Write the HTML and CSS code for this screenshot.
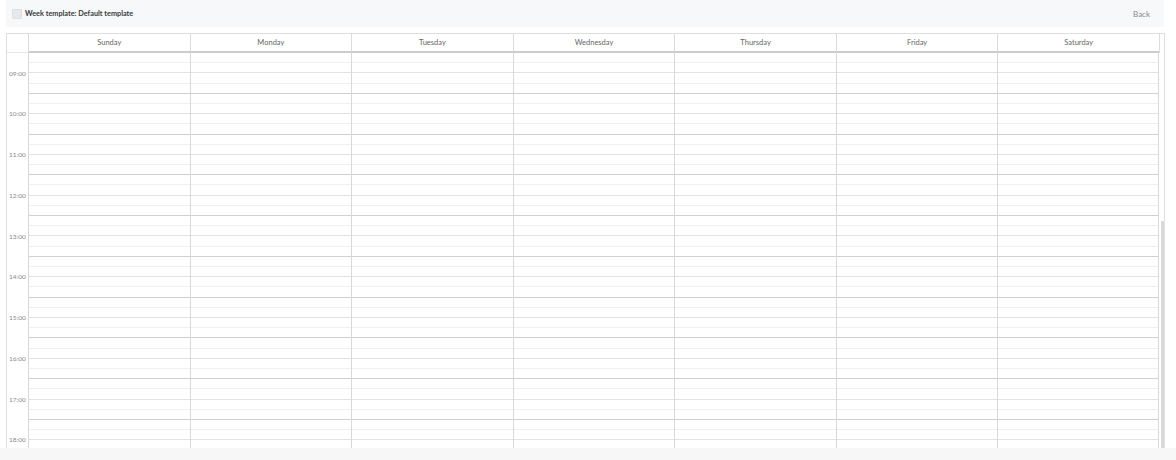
FILE: index.html
```html
<!DOCTYPE html>
<html lang="en">
<head>
  <meta charset="UTF-8" />
  <title>Week template</title>
  <link rel="stylesheet" href="styles.css">
</head>
<body>
  <div class="topbar">
    <div class="title">
      <span class="check"></span>
      <span>Week template: Default template</span>
    </div>
    <a class="back" href="#">Back</a>
  </div>

  <div class="calendar">
    <div class="head">
      <div class="axis"></div>
      <div class="day">Sunday</div>
      <div class="day">Monday</div>
      <div class="day">Tuesday</div>
      <div class="day">Wednesday</div>
      <div class="day">Thursday</div>
      <div class="day">Friday</div>
      <div class="day">Saturday</div>
      <div class="gutter"></div>
    </div>
    <div class="body">
      <div class="grid" id="grid"></div>
      <div class="scroll"><div class="thumb"></div></div>
    </div>
  </div>

  <div class="footer"></div>

  <script>
    const grid = document.getElementById('grid');
    for (let h = 9; h <= 18; h++) {
      let label = document.createElement('div');
      label.className = 'time';
      label.textContent = (h < 10 ? '0' + h : h) + ':00';
      grid.appendChild(label);
      for (let d = 0; d < 7; d++) {
        let cell = document.createElement('div');
        cell.className = 'cell';
        cell.innerHTML = '<div class="slot"></div><div class="slot half"></div><div class="slot"></div><div class="slot hour"></div>';
        grid.appendChild(cell);
      }
    }
  </script>
</body>
</html>
```

FILE: styles.css
```css
body {
  margin: 0;
  background-color: #fff;
  font-family: 'Lato', 'Open Sans', sans-serif;
  color: #555;
}

.topbar {
  margin: 0 12px 0 6px;
  height: 27px;
  background-color: #f7f8fa;
  display: flex;
  align-items: center;
  justify-content: space-between;
  padding: 0 14px 0 6px;
}

.title {
  display: flex;
  align-items: center;
  gap: 3px;
  font-size: 7.3px;
  font-weight: bold;
  color: #3a3a3a;
}

.check {
  width: 8px;
  height: 8px;
  background-color: #e6e8ec;
  border: 1px solid #dcdfe3;
  border-radius: 1px;
}

.back {
  font-size: 8px;
  color: #8a8a8a;
  text-decoration: none;
}

.calendar {
  margin: 6px 11px 0 6px;
  border: 1px solid #dedede;
  border-bottom: none;
  height: 414px;
  display: flex;
  flex-direction: column;
}

.head {
  display: grid;
  grid-template-columns: 21px repeat(7, 1fr) 5px;
  height: 19px;
  flex: none;
}

.head .axis {
  border-bottom: 1px solid #e6e6e6;
}

.head .day {
  border-left: 1px solid #dcdcdc;
  border-bottom: 2px solid #cccccc;
  font-size: 7.5px;
  color: #666;
  display: flex;
  align-items: center;
  justify-content: center;
}

.head .gutter {
  border-left: 1px solid #dcdcdc;
}

.body {
  flex: 1;
  display: flex;
  overflow: hidden;
}

.grid {
  flex: 1;
  display: grid;
  grid-template-columns: 21px repeat(7, 1fr);
  grid-auto-rows: 40.78px;
  align-content: start;
}

.time {
  font-size: 6.5px;
  color: #888;
  display: flex;
  align-items: center;
  padding-left: 2px;
  margin-top: -0.6px;
}

.cell {
  border-left: 1px solid #d8d8d8;
  display: flex;
  flex-direction: column;
}

.cell:nth-child(8n) {
  border-right: 1px solid #d8d8d8;
}

.slot {
  flex: 1;
  border-bottom: 1px solid #efefef;
}

.slot.half {
  border-bottom-color: #e2e2e2;
}

.slot.hour {
  border-bottom-color: #d0d0d0;
}

.scroll {
  width: 5px;
  position: relative;
}

.thumb {
  position: absolute;
  left: 2px;
  top: 168px;
  bottom: 0;
  width: 3px;
  background-color: #d9d9d9;
}

.footer {
  height: 13px;
  background-color: #f7f7f7;
}
```
